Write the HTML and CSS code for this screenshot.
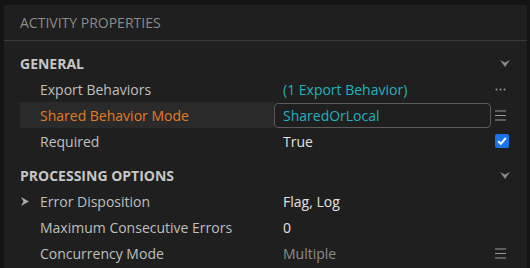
FILE: index.html
```html
<!DOCTYPE html>
<html lang="en">

<head>
    <meta charset="UTF-8">
    <title>Activity Properties</title>
    <link rel="stylesheet" href="styles.css">
</head>

<body>
    <div class="panel">
        <div class="panel-title">Activity Properties</div>

        <div class="section">
            <div class="section-head">
                <span>General</span>
                <svg class="chevron" width="10" height="7" viewBox="0 0 10 7"><path d="M0 0 L5 7 L10 0 L5 2.5 Z" /></svg>
            </div>
            <div class="row">
                <span class="mark"></span>
                <span class="label">Export Behaviors</span>
                <span class="value link">(1 Export Behavior)</span>
                <span class="icon">
                    <svg width="11" height="3" viewBox="0 0 11 3"><circle cx="1.5" cy="1.5" r="1" /><circle cx="5.5" cy="1.5" r="1" /><circle cx="9.5" cy="1.5" r="1" /></svg>
                </span>
            </div>
            <div class="row selected">
                <span class="mark"></span>
                <span class="label">Shared Behavior Mode</span>
                <span class="value"><span class="input">SharedOrLocal</span></span>
                <span class="icon">
                    <svg width="11" height="11" viewBox="0 0 11 11"><rect x="0" y="0.5" width="11" height="1" /><rect x="0" y="5" width="11" height="1" /><rect x="0" y="9.5" width="11" height="1" /></svg>
                </span>
            </div>
            <div class="row">
                <span class="mark"></span>
                <span class="label">Required</span>
                <span class="value">True</span>
                <span class="icon">
                    <span class="checkbox">
                        <svg width="14" height="14" viewBox="0 0 14 14"><path d="M3.2 7.2 L5.8 9.8 L10.8 4" /></svg>
                    </span>
                </span>
            </div>
        </div>

        <div class="section">
            <div class="section-head">
                <span>Processing Options</span>
                <svg class="chevron" width="10" height="7" viewBox="0 0 10 7"><path d="M0 0 L5 7 L10 0 L5 2.5 Z" /></svg>
            </div>
            <div class="row">
                <span class="mark">
                    <svg width="8" height="9" viewBox="0 0 8 9"><path d="M0 0 L8 4.5 L0 9 L2.5 4.5 Z" /></svg>
                </span>
                <span class="label">Error Disposition</span>
                <span class="value">Flag, Log</span>
                <span class="icon"></span>
            </div>
            <div class="row">
                <span class="mark"></span>
                <span class="label">Maximum Consecutive Errors</span>
                <span class="value">0</span>
                <span class="icon"></span>
            </div>
            <div class="row">
                <span class="mark"></span>
                <span class="label">Concurrency Mode</span>
                <span class="value muted">Multiple</span>
                <span class="icon">
                    <svg width="11" height="11" viewBox="0 0 11 11"><rect x="0" y="0.5" width="11" height="1" /><rect x="0" y="5" width="11" height="1" /><rect x="0" y="9.5" width="11" height="1" /></svg>
                </span>
            </div>
        </div>
    </div>
</body>

</html>
```
FILE: styles.css
```css
/* Page reset */
body {
    margin: 0;
    background-color: #141414;
    font-family: 'Open Sans', sans-serif;
    font-size: 14px;
    color: #bfbfbf;
}

/* The properties panel */
.panel {
    margin: 5px 3px 0 4px;
    height: 263px;
    background-color: #1f1f1f;
    overflow: hidden;
}

.panel-title {
    height: 35px;
    line-height: 35px;
    padding-left: 16px;
    text-transform: uppercase;
    color: #8b8b8b;
    border-bottom: 1px solid #3a3a3a;
    margin-bottom: 9px;
}

/* Sections */
.section {
    padding: 0 18px 0 16px;
    margin-bottom: 8px;
}

.section-head {
    display: flex;
    justify-content: space-between;
    align-items: center;
    height: 26px;
    line-height: 27px;
    font-weight: bold;
    text-transform: uppercase;
    color: #c6c6c6;
}

.chevron {
    fill: #8a8a8a;
    margin-right: -1px;
}

/* Property rows */
.row {
    display: grid;
    grid-template-columns: 20px 234px 1fr 14px;
    align-items: center;
    height: 26px;
    line-height: 28px;
}

.mark {
    display: flex;
    align-items: center;
    height: 26px;
    padding-left: 1px;
}

.mark svg {
    fill: #a8a8a8;
}

.label {
    height: 26px;
    white-space: nowrap;
}

.row.selected .mark,
.row.selected .label {
    background-color: #2a2a2a;
}

.row.selected .label {
    color: #e27c28;
}

.value {
    height: 26px;
    padding-left: 9px;
    color: #e2e2e2;
    white-space: nowrap;
}

.value.link {
    color: #22b1be;
}

.value.muted {
    color: #8c8c8c;
}

.row.selected .value {
    padding-left: 0;
    display: flex;
    align-items: center;
}

.input {
    flex: 1;
    height: 23px;
    line-height: 24px;
    margin-right: 4px;
    padding-left: 8px;
    border: 1px solid #5a5a5a;
    border-radius: 4px;
    color: #22b1be;
}

.icon {
    display: flex;
    align-items: center;
    height: 26px;
}

.icon svg {
    fill: #9a9a9a;
}

.checkbox {
    display: block;
    width: 14px;
    height: 14px;
    border-radius: 2px;
    background-color: #1a73e8;
}

.checkbox svg {
    display: block;
    fill: none;
    stroke: #ffffff;
    stroke-width: 2;
}
```
